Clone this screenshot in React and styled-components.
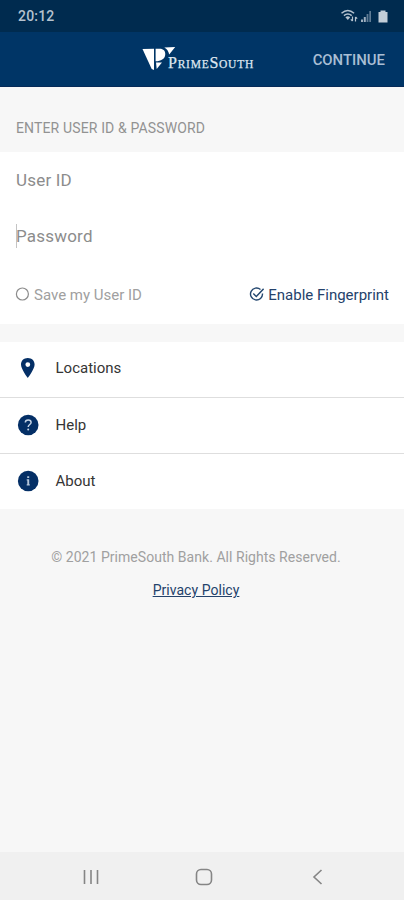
import React from "react";
import styled, { createGlobalStyle } from "styled-components";

const links = [
  { label: "Locations", icon: <PinIcon /> },
  { label: "Help", icon: <HelpIcon /> },
  { label: "About", icon: <AboutIcon /> }
];

export default function App() {
  return (
    <Screen>
      <GlobalStyle />
      <StatusBar>
        <Clock>20:12</Clock>
        <StatusIcons />
      </StatusBar>
      <Header>
        <Brand>
          <LogoMark />
          <Wordmark>
            <b>P</b>RIME<b>S</b>OUTH
          </Wordmark>
        </Brand>
        <Continue>CONTINUE</Continue>
      </Header>

      <SectionTitle>ENTER USER ID &amp; PASSWORD</SectionTitle>
      <LoginForm>
        <Field>User ID</Field>
        <Field>
          <Caret />
          Password
        </Field>
        <Options>
          <Option>
            <RadioIcon />
            Save my User ID
          </Option>
          <Option $active>
            <CheckIcon />
            Enable Fingerprint
          </Option>
        </Options>
      </LoginForm>

      <Menu>
        {links.map(link => (
          <MenuItem key={link.label}>
            {link.icon}
            <span>{link.label}</span>
          </MenuItem>
        ))}
      </Menu>

      <Footer>
        <p>© 2021 PrimeSouth Bank. All Rights Reserved.</p>
        <a>Privacy Policy</a>
      </Footer>

      <NavBar>
        <svg width="16" height="16" viewBox="0 0 16 16">
          <path d="M1.5 1v14M8 1v14M14.5 1v14" />
        </svg>
        <svg width="18" height="18" viewBox="0 0 18 18">
          <rect x="1.5" y="1.5" width="15" height="15" rx="4.5" />
        </svg>
        <svg width="16" height="16" viewBox="0 0 16 16">
          <path d="M12.5 1L5 8l7.5 7" />
        </svg>
      </NavBar>
    </Screen>
  );
}

function StatusIcons() {
  return (
    <svg width="50" height="16" viewBox="340 7 50 16" fill="none">
      <g stroke="#b5c3d0" strokeWidth="1.5">
        <path d="M341.5 12.3Q347.8 6.8 354.1 12.3" />
        <path d="M343.9 14.6Q347.8 11.3 351.7 14.6" />
        <path
          d="M352.5 15.5v4.5M350.8 18.3l1.7 1.700M355.500 20.500v-4.500M357.200 17.700l-1.700-1.700"
          strokeWidth="1.2"
        />
      </g>
      <path d="M345.4 16.300Q347.800 14.300 350.200 16.300L347.800 19z" fill="#b5c3d0" />
      <path d="M361 18.5h2v2.5h-2zM363.8 16h2v5h-2z" fill="#9fb0c0" />
      <path d="M366.6 13h1.8v8h-1.800zM369.3 10h1.700v11h-1.700z" fill="#5f7c95" />
      <path d="M380.500 9.500h5v1.500h2v10.500h-9V11h2z" fill="#c3ced8" />
    </svg>
  );
}

function LogoMark() {
  return (
    <svg width="34" height="24" viewBox="142 47 34 24" fill="#fff">
      <path d="M142.5 49L154 48.7V70L151.7 69z" />
      <path d="M155.6 48.7H161C164.5 49.5 165.6 52 165.2 55C164.7 59 161 61.2 155.6 61.3z" />
      <path d="M156 62.6H162L156.7 69z" />
      <path d="M164.3 47.5L175.2 47L169.2 54.5C168.500 51 167 49 164.300 47.500z" />
    </svg>
  );
}

function RadioIcon() {
  return (
    <svg width="14" height="14" viewBox="0 0 14 14" fill="none">
      <circle cx="7.4" cy="7" r="6" stroke="#8b8b8b" strokeWidth="1.2" />
    </svg>
  );
}

function CheckIcon() {
  return (
    <svg width="15" height="15" viewBox="0 0 15 15" fill="none">
      <g stroke="#24476f" strokeWidth="1.4">
        <path d="M11.5 2.5A6 6 0 1 0 13.500 6.500" />
        <path d="M4.300 6.500l3 3 7.300-7.700" />
      </g>
    </svg>
  );
}

function PinIcon() {
  return (
    <svg width="22" height="22" viewBox="0 0 22 22">
      <path
        d="M10.800 1C6.800 1 4 3.800 4 7.600C4 12.300 10.800 21 10.800 21S17.600 12.300 17.600 7.600C17.600 3.800 14.800 1 10.800 1zM10.800 5.200a2.400 2.400 0 1 1 0 4.800a2.400 2.400 0 0 1 0-4.800z"
        fill="#042f66"
        fillRule="evenodd"
      />
    </svg>
  );
}

function HelpIcon() {
  return (
    <svg width="22" height="22" viewBox="0 0 22 22" fill="none">
      <circle cx="11.2" cy="11" r="10.3" fill="#042f66" />
      <path
        d="M8.300 8.500C8.300 6.900 9.500 5.900 11.200 5.900S14.100 6.900 14.100 8.400C14.100 10.400 11.200 10.600 11.200 13"
        stroke="#c4d2e3"
        strokeWidth="1.5"
      />
      <circle cx="11.2" cy="15.6" r="1" fill="#c4d2e3" />
    </svg>
  );
}

function AboutIcon() {
  return (
    <svg width="22" height="22" viewBox="0 0 22 22">
      <circle cx="11.2" cy="11" r="10.3" fill="#042f66" />
      <path d="M10.200 6.300h2v1.800h-2zM9.700 9.300h2.500v5h.6v1.200H9.700v-1.200h.6v-3.800h-.6z" fill="#b4c6da" />
    </svg>
  );
}

const GlobalStyle = createGlobalStyle`
  * {
    box-sizing: border-box;
  }

  body {
    margin: 0;
    background: #f7f7f7;
    font-family: Roboto, sans-serif;
  }

  svg {
    display: block;
    flex-shrink: 0;
  }
`;

const Screen = styled.div`
  display: flex;
  flex-direction: column;
  width: 404px;
  height: 900px;
  background: #f7f7f7;
`;

const StatusBar = styled.div`
  display: flex;
  align-items: center;
  justify-content: space-between;
  height: 32px;
  padding: 0 14px 1px 18px;
  background: #002b4f;
`;

const Clock = styled.span`
  color: #b5c2ce;
  font-size: 14px;
  font-weight: 500;
  letter-spacing: 0.2px;
`;

const Header = styled.header`
  display: flex;
  justify-content: space-between;
  height: 55px;
  padding: 0 19px 0 142px;
  background: #003566;
  border-bottom: 1px solid #062a58;
`;

const Brand = styled.div`
  display: flex;
  padding-top: 15px;
`;

const Wordmark = styled.div`
  margin: 7px 0 0 -8px;
  color: #dfe7f0;
  font-family: "Liberation Serif", serif;
  font-size: 11.5px;
  line-height: 18px;
  letter-spacing: 0.75px;
  white-space: nowrap;
  -webkit-text-stroke: 0.25px #dfe7f0;

  b {
    font-size: 16px;
    font-weight: 400;
  }
`;

const Continue = styled.div`
  color: #a9bed4;
  font-size: 14.9px;
  font-weight: 500;
  line-height: 56px;
`;

const SectionTitle = styled.div`
  height: 65px;
  padding: 32px 16px 0;
  color: #929292;
  font-size: 14px;
  line-height: 18px;
  letter-spacing: 0.14px;
`;

const LoginForm = styled.div`
  height: 172px;
  background: #fff;
`;

const Field = styled.div`
  display: flex;
  align-items: center;
  height: 56px;
  padding: 0 16px;
  color: #8c8c8c;
  font-size: 17px;
  letter-spacing: 0.2px;
`;

const Caret = styled.i`
  width: 1px;
  height: 24px;
  margin-right: -1px;
  background: #c4c4c4;
`;

const Options = styled.div`
  display: flex;
  align-items: center;
  justify-content: space-between;
  height: 60px;
  padding: 2px 15px 0 15px;
`;

const Option = styled.div`
  display: flex;
  align-items: center;
  gap: ${props => (props.$active ? 4 : 5)}px;
  color: ${props => (props.$active ? "#24426b" : "#a0a0a0")};
  font-size: 15px;
  line-height: 20px;

  svg {
    margin-top: -2px;
  }
`;

const Menu = styled.div`
  margin-top: 18px;
  background: #fff;
`;

const MenuItem = styled.div`
  display: flex;
  align-items: center;
  height: 56px;
  padding: 0 17px 2px;
  color: #353535;
  font-size: 15px;
  border-bottom: 1px solid #dedede;

  &:first-child {
    padding-bottom: 3px;
  }

  &:last-child {
    height: 55px;
    padding-bottom: 1px;
    border: 0;
  }

  span {
    margin-left: 16.5px;
  }
`;

const Footer = styled.div`
  flex: 1;
  padding: 38px 12px 0 0;
  color: #a0a0a0;
  font-size: 14px;
  line-height: 20px;
  letter-spacing: 0.04px;
  text-align: center;

  p {
    margin: 0 0 13px;
  }

  a {
    color: #24426b;
    text-decoration: underline;
  }
`;

const NavBar = styled.div`
  display: flex;
  align-items: center;
  justify-content: space-between;
  height: 48px;
  padding: 1px 79px 0 83px;
  background: #f0f0f0;

  svg {
    fill: none;
    stroke: #858585;
    stroke-width: 1.6;
  }
`;
